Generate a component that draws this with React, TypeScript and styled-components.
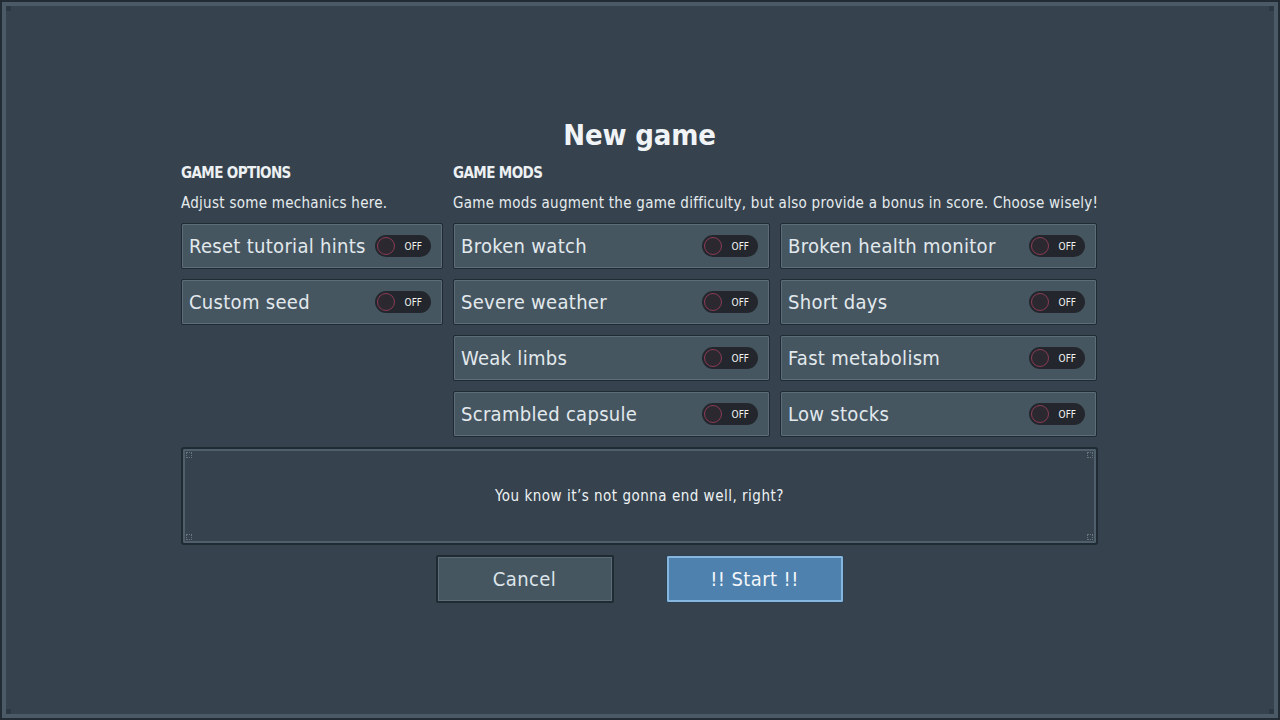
import * as React from 'react'
import styled, { createGlobalStyle } from 'styled-components'

const GlobalStyle = createGlobalStyle`
  html, body {
    margin: 0;
    padding: 0;
    background: #36434e;
  }
  body {
    font-family: "DejaVu Sans Condensed", "Liberation Sans Narrow", "Open Sans", sans-serif;
    color: #dfe6ea;
  }
`

const Frame = styled.div`
  position: relative;
  box-sizing: border-box;
  width: 1280px;
  height: 720px;
  padding: 117px 0 0 181px;
  background: #36434e;
  box-shadow: inset 0 0 0 2px #222c35, inset 0 0 0 6px #4b5a66;
  display: flex;
  align-items: flex-start;
`

const Corner = styled.span<{ right?: boolean, bottom?: boolean }>`
  position: absolute;
  width: 5px;
  height: 5px;
  background: #2c3944;
  ${props => props.right ? 'right: 6px;' : 'left: 6px;'}
  ${props => props.bottom ? 'bottom: 6px;' : 'top: 6px;'}
`

const Dialog = styled.div`
  width: 917px;
  display: flex;
  flex-direction: column;
`

const Title = styled.h1`
  margin: 0 0 10px 0;
  text-align: center;
  font-size: 29px;
  line-height: 36px;
  font-weight: bold;
  letter-spacing: -0.2px;
  color: #f1f4f6;
`

const Columns = styled.div`
  display: flex;
  gap: 10px;
`

const Section = styled.section<{ width: number }>`
  width: ${props => props.width}px;
  display: flex;
  flex-direction: column;
`

const Heading = styled.h2`
  margin: 0;
  font-size: 15px;
  line-height: 20px;
  font-weight: bold;
  letter-spacing: -0.6px;
  text-transform: uppercase;
  color: #eef1f3;
`

const Description = styled.p`
  margin: 10px 0;
  font-size: 15px;
  line-height: 20px;
  letter-spacing: 0.28px;
  white-space: nowrap;
  color: #e6ebee;
`

const Grid = styled.div<{ cols: number }>`
  display: grid;
  grid-template-columns: repeat(${props => props.cols}, 1fr);
  gap: 10px;
`

const Row = styled.div`
  box-sizing: border-box;
  height: 46px;
  display: flex;
  align-items: center;
  justify-content: space-between;
  padding: 0 11px 0 7px;
  background: #465661;
  border: 1px solid #1f2a32;
  box-shadow: inset 0 0 0 1px #5c6d79;
  border-radius: 2px;
`

const Label = styled.span`
  font-size: 20px;
  color: #e2e9ed;
  letter-spacing: 0.3px;
  white-space: nowrap;
`

const Toggle = styled.div`
  position: relative;
  flex: none;
  width: 56px;
  height: 22px;
  border-radius: 11px;
  background: #23272d;
  display: flex;
  align-items: center;
  justify-content: flex-end;
  padding-right: 9px;
  box-sizing: border-box;
`

const Knob = styled.span`
  position: absolute;
  left: 2px;
  top: 2px;
  width: 18px;
  height: 18px;
  box-sizing: border-box;
  border-radius: 50%;
  border: 1px solid #8a3c55;
  background: #2b282f;
`

const ToggleText = styled.span`
  font-size: 10px;
  color: #f3f3f3;
`

const MessageBox = styled.div`
  position: relative;
  box-sizing: border-box;
  margin-top: 10px;
  height: 98px;
  border: 2px solid #1f2a32;
  border-radius: 3px;
  box-shadow: inset 0 0 0 2px #4f5f6b;
  display: flex;
  align-items: center;
  justify-content: center;
  font-size: 15px;
  letter-spacing: 0.5px;
  color: #eef2f4;
`

const BoxDot = styled.span<{ right?: boolean, bottom?: boolean }>`
  position: absolute;
  width: 4px;
  height: 4px;
  border: 1px dotted #66777f;
  ${props => props.right ? 'right: 3px;' : 'left: 3px;'}
  ${props => props.bottom ? 'bottom: 3px;' : 'top: 3px;'}
`

const Actions = styled.div`
  display: flex;
  justify-content: center;
  gap: 52px;
  margin-top: 10px;
`

const Button = styled.button<{ primary?: boolean }>`
  box-sizing: border-box;
  width: 178px;
  height: 48px;
  font-family: inherit;
  font-size: 20px;
  letter-spacing: 0.4px;
  border-radius: 2px;
  cursor: pointer;
  color: ${props => props.primary ? '#f2f6fa' : '#dde5ea'};
  background: ${props => props.primary ? '#4e81ad' : '#465661'};
  border: ${props => props.primary ? '1px solid #2e4152' : '2px solid #1f2a32'};
  box-shadow: inset 0 0 0 ${props => props.primary ? '2px #86b6de' : '1px #5c6d79'};
`

function Switch () {
  return (
    <Toggle>
      <Knob />
      <ToggleText>OFF</ToggleText>
    </Toggle>
  )
}

function Option ({ label }: { label: string }) {
  return (
    <Row>
      <Label>{label}</Label>
      <Switch />
    </Row>
  )
}

const gameOptions = ['Reset tutorial hints', 'Custom seed']

const gameMods = [
  'Broken watch', 'Broken health monitor',
  'Severe weather', 'Short days',
  'Weak limbs', 'Fast metabolism',
  'Scrambled capsule', 'Low stocks',
]

export default function App () {
  return (
    <>
      <GlobalStyle />
      <Frame>
        <Corner />
        <Corner right />
        <Corner bottom />
        <Corner right bottom />
        <Dialog>
          <Title>New game</Title>
          <Columns>
            <Section width={262}>
              <Heading>Game options</Heading>
              <Description>Adjust some mechanics here.</Description>
              <Grid cols={1}>
                {gameOptions.map(o => <Option key={o} label={o} />)}
              </Grid>
            </Section>
            <Section width={644}>
              <Heading>Game mods</Heading>
              <Description>
                Game mods augment the game difficulty, but also provide a bonus in score. Choose wisely!
              </Description>
              <Grid cols={2}>
                {gameMods.map(m => <Option key={m} label={m} />)}
              </Grid>
            </Section>
          </Columns>
          <MessageBox>
            <BoxDot />
            <BoxDot right />
            <BoxDot bottom />
            <BoxDot right bottom />
            You know it’s not gonna end well, right?
          </MessageBox>
          <Actions>
            <Button>Cancel</Button>
            <Button primary>!! Start !!</Button>
          </Actions>
        </Dialog>
      </Frame>
    </>
  )
}
